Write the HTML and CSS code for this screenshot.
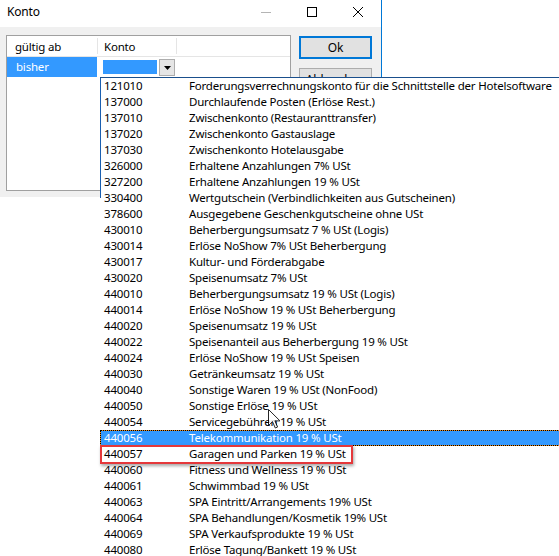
FILE: index.html
```
<!DOCTYPE html>
<html lang="de">
<head>
<meta charset="utf-8">
<title>Konto</title>
<link rel="stylesheet" href="styles.css">
</head>
<body>
<div class="screen">
  <div class="dialog">
    <div class="titlebar">
      <span class="title">Konto</span>
      <div class="controls">
        <span class="ctl"><svg width="10" height="10" viewBox="0 0 10 10"><path d="M0 5.5H10" stroke="#b4b4b4" stroke-width="1"/></svg></span>
        <span class="ctl"><svg width="10" height="10" viewBox="0 0 10 10"><rect x="0.5" y="0.5" width="9" height="9" fill="none" stroke="#000" stroke-width="1"/></svg></span>
        <span class="ctl"><svg width="10" height="10" viewBox="0 0 10 10"><path d="M0 0L10 10M10 0L0 10" stroke="#000" stroke-width="1"/></svg></span>
      </div>
    </div>
    <div class="client">
      <div class="grid">
        <div class="grid-head">
          <div class="hcell hc1">gültig ab</div>
          <div class="hsep"></div>
          <div class="hcell hc2">Konto</div>
          <div class="hsep"></div>
          <div class="hcell hc3"></div>
        </div>
        <div class="grid-row">
          <div class="cell rc1">bisher</div>
          <div class="cell rc2">
            <span class="combo-val"></span>
            <span class="combo-btn"><svg width="7" height="4" viewBox="0 0 7 4"><path d="M0 0H7L3.5 4Z" fill="#000"/></svg></span>
          </div>
        </div>
      </div>
      <div class="buttons">
        <div class="btn btn-default">Ok</div>
        <div class="btn">Abbrechen</div>
      </div>
    </div>
  </div>

  <div class="droplist">
    <div class="item"><span class="code">121010</span><span class="desc">Forderungsverrechnungskonto für die Schnittstelle der Hotelsoftware</span></div>
    <div class="item"><span class="code">137000</span><span class="desc">Durchlaufende Posten (Erlöse Rest.)</span></div>
    <div class="item"><span class="code">137010</span><span class="desc">Zwischenkonto (Restauranttransfer)</span></div>
    <div class="item"><span class="code">137020</span><span class="desc">Zwischenkonto Gastauslage</span></div>
    <div class="item"><span class="code">137030</span><span class="desc">Zwischenkonto Hotelausgabe</span></div>
    <div class="item"><span class="code">326000</span><span class="desc">Erhaltene Anzahlungen 7% USt</span></div>
    <div class="item"><span class="code">327200</span><span class="desc">Erhaltene Anzahlungen 19 % USt</span></div>
    <div class="item"><span class="code">330400</span><span class="desc">Wertgutschein (Verbindlichkeiten aus Gutscheinen)</span></div>
    <div class="item"><span class="code">378600</span><span class="desc">Ausgegebene Geschenkgutscheine ohne USt</span></div>
    <div class="item"><span class="code">430010</span><span class="desc">Beherbergungsumsatz 7 % USt (Logis)</span></div>
    <div class="item"><span class="code">430014</span><span class="desc">Erlöse NoShow 7% USt Beherbergung</span></div>
    <div class="item"><span class="code">430017</span><span class="desc">Kultur- und Förderabgabe</span></div>
    <div class="item"><span class="code">430020</span><span class="desc">Speisenumsatz 7% USt</span></div>
    <div class="item"><span class="code">440010</span><span class="desc">Beherbergungsumsatz 19 % USt (Logis)</span></div>
    <div class="item"><span class="code">440014</span><span class="desc">Erlöse NoShow 19 % USt Beherbergung</span></div>
    <div class="item"><span class="code">440020</span><span class="desc">Speisenumsatz 19 % USt</span></div>
    <div class="item"><span class="code">440022</span><span class="desc">Speisenanteil aus Beherbergung 19 % USt</span></div>
    <div class="item"><span class="code">440024</span><span class="desc">Erlöse NoShow 19 % USt Speisen</span></div>
    <div class="item"><span class="code">440030</span><span class="desc">Getränkeumsatz 19 % USt</span></div>
    <div class="item"><span class="code">440040</span><span class="desc">Sonstige Waren 19 % USt (NonFood)</span></div>
    <div class="item"><span class="code">440050</span><span class="desc">Sonstige Erlöse 19 % USt</span></div>
    <div class="item"><span class="code">440054</span><span class="desc">Servicegebühren 19 % USt</span></div>
    <div class="item item-selected"><span class="code">440056</span><span class="desc">Telekommunikation 19 % USt</span></div>
    <div class="item"><span class="code">440057</span><span class="desc">Garagen und Parken 19 % USt</span></div>
    <div class="item"><span class="code">440060</span><span class="desc">Fitness und Wellness 19 % USt</span></div>
    <div class="item"><span class="code">440061</span><span class="desc">Schwimmbad 19 % USt</span></div>
    <div class="item"><span class="code">440063</span><span class="desc">SPA Eintritt/Arrangements 19% USt</span></div>
    <div class="item"><span class="code">440064</span><span class="desc">SPA Behandlungen/Kosmetik 19% USt</span></div>
    <div class="item"><span class="code">440069</span><span class="desc">SPA Verkaufsprodukte 19 % USt</span></div>
    <div class="item"><span class="code">440080</span><span class="desc">Erlöse Tagung/Bankett 19 % USt</span></div>
  </div>

  <div class="marker"></div>

  <svg class="cursor" width="13" height="20" viewBox="0 0 13 20">
    <path d="M0.5 0.5V16.5L4.5 12.7L7.3 19L9.6 18L6.9 11.9H12Z" fill="#fff" stroke="#000" stroke-width="1" stroke-linejoin="round" opacity="0.85"/>
  </svg>
</div>
</body>
</html>
```

FILE: styles.css
```
* { box-sizing: border-box; }

html, body {
  margin: 0;
  padding: 0;
  background: #fff;
}

body {
  font-family: "Noto Sans", "Open Sans", "DejaVu Sans", sans-serif;
  font-size: 11.5px;
  letter-spacing: -0.2px;
  color: #000;
}

.screen {
  position: relative;
  width: 559px;
  height: 556px;
  overflow: hidden;
  background: #fff;
}

/* ---------- dialog ---------- */
.dialog {
  width: 382px;
  height: 197px;
  border-right: 1px solid #0078d7;
  display: flex;
  flex-direction: column;
}

.titlebar {
  height: 27px;
  background: #fff;
  display: flex;
  align-items: flex-start;
  justify-content: space-between;
}

.title {
  padding: 4px 0 0 7px;
  line-height: 16px;
  font-size: 12px;
}

.controls {
  display: flex;
}

.ctl {
  width: 46px;
  height: 24px;
  display: flex;
  align-items: center;
  justify-content: center;
}

.ctl svg { display: block; }

.client {
  flex: 1;
  background: #f0f0f0;
  display: flex;
  align-items: flex-start;
  padding: 8px 0 0 6px;
  gap: 8px;
}

.grid {
  width: 285px;
  height: 156px;
  background: #fff;
  border: 1px solid #a0a0a0;
}

.grid-head {
  height: 21px;
  display: flex;
  align-items: center;
  border-bottom: 1px solid #e5e5e5;
}

.hcell {
  height: 20px;
  padding-top: 2px;
  line-height: 18px;
  white-space: nowrap;
}

.hc1 { width: 90px; padding-left: 8px; }
.hc2 { width: 78px; padding-left: 6px; }
.hc3 { flex: 1; }

.hsep {
  width: 1px;
  height: 16px;
  background: #e5e5e5;
}

.grid-row {
  height: 20px;
  display: flex;
}

.cell {
  height: 20px;
  line-height: 20px;
}

.rc1 {
  width: 90px;
  padding-left: 9px;
  background: #3399ff;
  color: #fff;
}

.rc2 {
  width: 79px;
  display: flex;
  align-items: flex-start;
  padding-left: 6px;
}

.combo-val {
  width: 54px;
  height: 14px;
  margin-top: 3px;
  background: #3399ff;
}

.combo-btn {
  width: 16px;
  height: 17px;
  margin-top: 2px;
  margin-left: 2px;
  background: #e5e5e5;
  border: 1px solid #adadad;
  display: flex;
  align-items: center;
  justify-content: center;
}

.combo-btn svg { display: block; margin-top: 1px; }

.buttons {
  display: flex;
  flex-direction: column;
  gap: 9px;
  margin-top: 1px;
}

.btn {
  width: 73px;
  height: 23px;
  background: #e1e1e1;
  border: 1px solid #adadad;
  text-align: center;
  line-height: 21px;
  font-size: 12px;
}

.btn-default {
  border: 2px solid #0078d7;
  line-height: 19px;
}

/* ---------- drop-down list (popup) ---------- */
.droplist {
  position: absolute;
  left: 100px;
  top: 77px;
  width: 470px;
  height: 480px;
  border-top: 1px solid #1a4f8c;
  background: linear-gradient(#1a5fb0, #1a5fb0) left top / 1px 120px no-repeat, #fff;
}

.item {
  position: relative;
  height: 16px;
  line-height: 16px;
  display: flex;
  padding-left: 4px;
  white-space: nowrap;
}

.code {
  width: 85px;
  flex: none;
}

.item-selected {
  background: #3399ff;
  color: #fff;
  box-shadow: inset 0 0 0 1px #e8891c;
}

.item-selected::after {
  content: "";
  position: absolute;
  inset: 0;
  border: 1px dotted #000;
}

/* red annotation box */
.marker {
  position: absolute;
  left: 100px;
  top: 445px;
  width: 253px;
  height: 19px;
  border: 2px solid #e5383b;
  box-shadow: 1px 2px 3px rgba(0, 0, 0, 0.35);
}

.cursor {
  position: absolute;
  left: 268px;
  top: 409px;
}
```
